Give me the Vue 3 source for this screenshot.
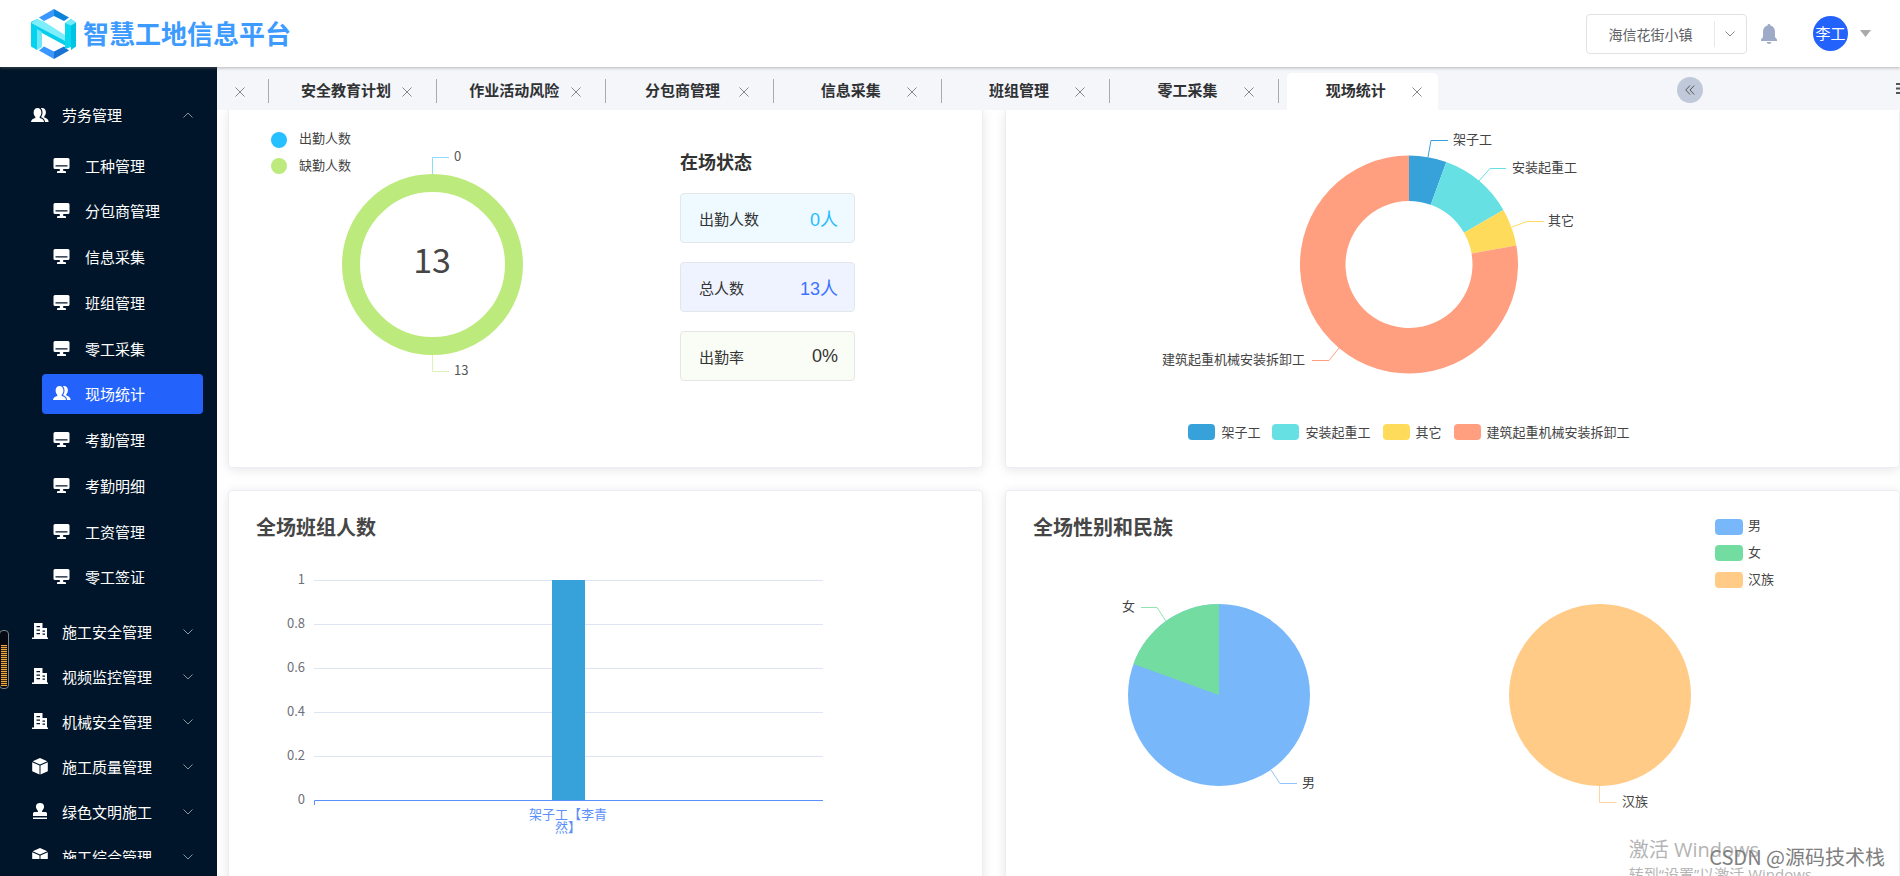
<script setup>
const children = [
  '工种管理', '分包商管理', '信息采集', '班组管理', '零工采集',
  '现场统计', '考勤管理', '考勤明细', '工资管理', '零工签证',
]
const groups = [
  { name: '施工安全管理', icon: 'office' },
  { name: '视频监控管理', icon: 'office' },
  { name: '机械安全管理', icon: 'office' },
  { name: '施工质量管理', icon: 'box' },
  { name: '绿色文明施工', icon: 'stamp' },
  { name: '施工综合管理', icon: 'box' },
]
const icons = {
  users:
    'M6.500 1c2.300 0 3.900 1.900 3.900 4.500 0 1.900-.8 3.400-1.700 4.300v1.200c1.900.6 4.300 1.500 4.300 4H0c0-2.500 2.400-3.400 4.300-4V9.800C3.400 8.900 2.600 7.400 2.600 5.500 2.600 2.900 4.200 1 6.500 1zM9.800 1.300C10.200 1.100 10.700 1 11.200 1c2.200 0 3.700 1.800 3.700 4.200 0 1.800-.8 3.300-1.600 4.100v1.300c1.800.6 4.300 1.500 4.300 4.400h-3.600c-.1-2.500-1.600-3.900-3.800-4.700V9.700c.8-1.100 1.300-2.600 1.300-4.200 0-1.700-.6-3.200-1.700-4.200z',
  platform:
    'M2 1h13a1.500 1.500 0 0 1 1.500 1.500v8A1.500 1.500 0 0 1 15 12h-4.800v2H12a1 1 0 0 1 1 1v1H4v-1a1 1 0 0 1 1-1h1.800v-2H2A1.500 1.500 0 0 1 .5 10.500v-8A1.500 1.500 0 0 1 2 1zM2.500 8.300v1.200h12V8.300z',
  office:
    'M2 0h8.500v5H15v9.500h1V16H0v-1.500h2zM4.500 3v1.300H8V3zM4.500 6.500v1.300H8V6.500zM4.500 10v1.300H8V10zM10.500 7.500v1.200H13V7.500zM10.500 10.500v1.200H13v-1.200z',
  box:
    'M8 0l7.300 3.200L8 6.600.7 3.200zM.2 4.200l7.300 3.400V16.500L.2 13.200zM15.800 4.200L8.500 7.600v8.900l7.300-3.300z',
  stamp:
    'M8 0a4.100 4.100 0 0 1 4.100 4.100C12.100 6.200 10 7 10 9h3.500A1.500 1.500 0 0 1 15 10.500V13H1v-2.500A1.500 1.500 0 0 1 2.500 9H6c0-2-2.100-2.800-2.100-4.900A4.100 4.100 0 0 1 8 0zM1 14.500h14V16H1z',
}
const tabs = ['安全教育计划', '作业活动风险', '分包商管理', '信息采集', '班组管理', '零工采集', '现场统计']

const trades = [
  { name: '架子工', color: '#37a2da', from: 0, to: 20 },
  { name: '安装起重工', color: '#67e0e3', from: 20, to: 60 },
  { name: '其它', color: '#ffdb5c', from: 60, to: 80 },
  { name: '建筑起重机械安装拆卸工', color: '#ff9f7f', from: 80, to: 360 },
]
const stats = [
  { name: '出勤人数', value: '0人', tone: 'sky' },
  { name: '总人数', value: '13人', tone: 'blue' },
  { name: '出勤率', value: '0%', tone: 'lime' },
]
const ticks = ['1', '0.8', '0.6', '0.4', '0.2', '0']

function slice(cx, cy, outer, inner, from, to) {
  const at = (r, deg) => {
    const a = (deg * Math.PI) / 180
    return `${(cx + r * Math.sin(a)).toFixed(2)} ${(cy - r * Math.cos(a)).toFixed(2)}`
  }
  const large = to - from > 180 ? 1 : 0
  return `M${at(outer, from)}A${outer} ${outer} 0 ${large} 1 ${at(outer, to)}L${at(inner, to)}A${inner} ${inner} 0 ${large} 0 ${at(inner, from)}Z`
}
</script>

<template>
  <div class="page">
    <header class="header">
      <a class="brand" href="#">
        <svg width="46" height="50" viewBox="0 0 46 50" aria-hidden="true">
          <path d="M23 0 8 8.500l5 3.500 10-5z" fill="#3a97ff" />
          <path d="M23 0l15 8.500-5 3.500-10-5z" fill="#0b83d8" />
          <path d="M23 50 8 41.500l5-4 10 5z" fill="#3a97ff" />
          <path d="M23 50l15-8.500-5-4-10 5z" fill="#1a72d2" />
          <path d="M0 13l6-3 30 18v9.500L0 18z" fill="#07cdec" />
          <path d="M6 10 12 12 34 26v6L0 14z" fill="#7eeefb" />
          <path d="M0 14l6 4v23L0 37.500z" fill="#04d3f0" />
          <path d="M6 20l5 3v15l-5 3z" fill="#6de6f8" />
          <path d="M34 14l6-4v28l-6 2z" fill="#0ad8ee" />
          <path d="M40 10l5 3.500v24L40 41z" fill="#00c4e4" />
          <path d="M34 14l6-4 5 3.500-5 3z" fill="#74ecfa" />
        </svg>
        <span>智慧工地信息平台</span>
      </a>
      <div class="tools">
        <button class="project" type="button">
          <span class="project-name">海信花街小镇</span>
          <span class="project-arrow">
            <svg width="10" height="6" viewBox="0 0 10 6"><path d="M.5.5 5 5 9.500.5" fill="none" stroke="#888" /></svg>
          </span>
        </button>
        <button class="bell" type="button" aria-label="通知">
          <svg width="18" height="20" viewBox="0 0 18 20">
            <path d="M9 0a1.500 1.500 0 0 1 1.500 1.600C13.300 2.300 15 4.700 15 8v5l2 2.600V17H1v-1.400L3 13V8c0-3.300 1.700-5.700 4.500-6.400A1.500 1.500 0 0 1 9 0zM6.500 18h5a2.600 2.600 0 0 1-5 0z" fill="#9dabc8" />
          </svg>
        </button>
        <button class="user" type="button">
          <span class="avatar">李工</span>
          <svg width="11" height="7" viewBox="0 0 11 7"><path d="M0 0h11L5.500 7z" fill="#aaa" /></svg>
        </button>
      </div>
    </header>

    <div class="body">
      <nav class="sidebar">
        <div class="menu">
          <button class="group" type="button">
            <svg class="icon" width="18" height="16" viewBox="0 0 18 16"><path :d="icons.users" /></svg>
            <span>劳务管理</span>
            <svg class="arrow" width="10" height="6" viewBox="0 0 10 6"><path d="M.5 5.500 5 1l4.500 4.500" /></svg>
          </button>
          <ul class="children">
            <li v-for="name in children" :key="name">
              <a href="#" class="child" :class="{ active: name === '现场统计' }">
                <svg class="icon" width="18" height="17" viewBox="0 0 18 17">
                  <path :d="name === '现场统计' ? icons.users : icons.platform" fill-rule="evenodd" />
                </svg>
                <span>{{ name }}</span>
              </a>
            </li>
          </ul>
          <button v-for="g in groups" :key="g.name" class="group" type="button">
            <svg class="icon" width="18" height="17" viewBox="-1 0 18 17"><path :d="icons[g.icon]" fill-rule="evenodd" /></svg>
            <span>{{ g.name }}</span>
            <svg class="arrow" width="10" height="6" viewBox="0 0 10 6"><path d="M.5.5 5 5 9.500.5" /></svg>
          </button>
        </div>
        <div class="meter"><i></i></div>
      </nav>

      <div class="content">
        <div class="tabbar">
          <button class="close first" type="button" aria-label="关闭">
            <svg width="12" height="12" viewBox="0 0 12 12"><path d="M1.500 1.500l9 9M10.500 1.500l-9 9" /></svg>
          </button>
          <ul class="tabs">
            <li v-for="(t, i) in tabs" :key="t" class="tab" :class="{ current: i === 6 }">
              <a href="#">{{ t }}</a>
              <button class="close" type="button" aria-label="关闭">
                <svg width="12" height="12" viewBox="0 0 12 12"><path d="M1.500 1.500l9 9M10.500 1.500l-9 9" /></svg>
              </button>
            </li>
          </ul>
          <button class="collapse" type="button" aria-label="收起">
            <svg width="10" height="10" viewBox="0 0 10 10"><path d="M5 .5.8 5 5 9.500M9.200.5 5 5l4.200 4.500" /></svg>
          </button>
          <button class="more" type="button" aria-label="菜单">
            <svg width="14" height="11" viewBox="0 0 14 11"><path d="M0 1h14M0 5.500h14M0 10h14" /></svg>
          </button>
        </div>

        <main class="board">
          <section class="card top attendance">
            <svg class="chart" width="440" height="330" viewBox="0 0 440 330">
              <circle cx="50" cy="30" r="8" fill="#26bfff" />
              <text x="70" y="33">出勤人数</text>
              <circle cx="50" cy="56" r="8" fill="#bdea7d" />
              <text x="70" y="60">缺勤人数</text>
              <circle cx="203.500" cy="154.500" r="81.500" fill="none" stroke="#bdea7d" stroke-width="18" />
              <path d="M203.500 64V47.500H220" class="line" stroke="#8adcff" />
              <path d="M203.500 245v16.500H220" class="line" stroke="#dbf3b5" />
              <text x="225" y="51" class="num">0</text>
              <text x="225" y="265" class="num">13</text>
              <text x="203" y="163" class="total">13</text>
            </svg>
            <div class="status">
              <h3>在场状态</h3>
              <dl v-for="s in stats" :key="s.name" class="stat" :class="s.tone">
                <dt>{{ s.name }}</dt>
                <dd>{{ s.value }}</dd>
              </dl>
            </div>
          </section>

          <section class="card top">
            <svg class="chart" width="806" height="290" viewBox="1 0 806 290">
              <path v-for="t in trades" :key="t.name" :d="slice(404, 154.5, 109, 63.5, t.from, t.to)" :fill="t.color" />
              <path d="M423 47l3-16.500h17" class="line" stroke="#37a2da" />
              <text x="448" y="34">架子工</text>
              <path d="M474 71l11-12.500h16" class="line" stroke="#67e0e3" />
              <text x="507" y="62">安装起重工</text>
              <path d="M507 117l15-5.500h17" class="line" stroke="#ffdb5c" />
              <text x="543" y="115">其它</text>
              <path d="M334 238l-10 12.500h-17" class="line" stroke="#ff9f7f" />
              <text x="300" y="254" text-anchor="end">建筑起重机械安装拆卸工</text>
            </svg>
            <ul class="legend">
              <li v-for="t in trades" :key="t.name"><i :style="{ background: t.color }"></i>{{ t.name }}</li>
            </ul>
          </section>

          <section class="card">
            <h2>全场班组人数</h2>
            <svg class="chart bars" width="640" height="320" viewBox="0 0 640 320">
              <g v-for="(t, i) in ticks" :key="t">
                <path v-if="i < 5" :d="`M86 ${21.5 + i * 44}H595`" stroke="#dde4f2" />
                <text x="77" :y="25 + i * 44" text-anchor="end" class="tick">{{ t }}</text>
              </g>
              <rect x="324" y="21" width="33" height="221" fill="#37a2da" />
              <path d="M86.500 246v-4.500H595" fill="none" stroke="#5b8ff9" />
              <text x="340" y="260" text-anchor="middle" class="cat">架子工【李青</text>
              <text x="340" y="273" text-anchor="middle" class="cat">然】</text>
            </svg>
          </section>

          <section class="card">
            <h2>全场性别和民族</h2>
            <svg class="chart genders" width="808" height="330" viewBox="0 0 808 330">
              <circle cx="213" cy="184" r="91" fill="#78b7f9" />
              <path :d="slice(213, 184, 91, 0, 290, 360)" fill="#73dda1" />
              <path d="M160 110l-9-13.500h-16" class="line" stroke="#8fe4b4" />
              <text x="129" y="100" text-anchor="end">女</text>
              <path d="M265 259l9 13.500h17" class="line" stroke="#93c5fa" />
              <text x="296" y="276">男</text>
              <circle cx="594" cy="184" r="91" fill="#ffcb87" />
              <path d="M593.500 275v16.500h17" class="line" stroke="#ffd59f" />
              <text x="616" y="295">汉族</text>
              <rect x="709" y="8" width="28" height="16" rx="4" fill="#78b7f9" />
              <text x="742" y="19">男</text>
              <rect x="709" y="34" width="28" height="16" rx="4" fill="#73dda1" />
              <text x="742" y="46">女</text>
              <rect x="709" y="61" width="28" height="16" rx="4" fill="#ffcb87" />
              <text x="742" y="73">汉族</text>
            </svg>
          </section>
        </main>
      </div>
    </div>

    <div class="activate">
      <p class="activate-title">激活 Windows</p>
      <p>转到“设置”以激活 Windows。</p>
    </div>
    <p class="credit">CSDN @源码技术栈</p>
  </div>
</template>

<style>
body {
  margin: 0;
}
</style>

<style scoped>
.page {
  position: relative;
  display: flex;
  flex-direction: column;
  height: 100vh;
  overflow: hidden;
  background: #fff;
  color: #333;
  font-family: "Noto Sans CJK SC", sans-serif;
  font-size: 15px;
}
button {
  padding: 0;
  border: 0;
  background: none;
  font: inherit;
  color: inherit;
  cursor: pointer;
}
a {
  color: inherit;
  text-decoration: none;
}
ul, dl, dd, p, h2, h3 {
  margin: 0;
  padding: 0;
  list-style: none;
}
svg {
  display: block;
  flex: none;
}

.header {
  position: relative;
  z-index: 2;
  display: flex;
  align-items: center;
  justify-content: space-between;
  flex: none;
  height: 67px;
  padding: 0 29px 0 31px;
  background: #fff;
  box-shadow: 0 1px 3px rgba(120, 120, 120, 0.5);
}
.brand {
  display: flex;
  align-items: center;
  gap: 6px;
  color: #3d9bff;
  font-size: 26px;
  font-weight: 700;
  line-height: 48px;
}
.brand span {
  padding-bottom: 2px;
}
.tools, .user {
  display: flex;
  align-items: center;
}
.project {
  display: flex;
  align-items: center;
  box-sizing: border-box;
  width: 161px;
  height: 40px;
  margin-right: 13px;
  border: 1px solid #e2e2e2;
  border-radius: 4px;
  color: #606266;
  font-size: 14px;
}
.project-name {
  flex: 1;
  text-align: center;
}
.project-arrow {
  display: flex;
  align-items: center;
  height: 26px;
  padding: 0 11px 0 10px;
  border-left: 1px solid #e8e8e8;
}
.bell {
  margin-right: 35px;
}
.user {
  gap: 12px;
}
.avatar {
  width: 35px;
  height: 35px;
  border-radius: 50%;
  background: #2362fb;
  color: #fff;
  line-height: 34px;
  text-align: center;
}

.body {
  display: flex;
  flex: 1;
  min-height: 0;
}
.sidebar {
  position: relative;
  box-sizing: border-box;
  flex: none;
  width: 217px;
  padding: 25px 14px 17px 0;
  background: #001529;
  color: #fff;
}
.menu {
  height: 100%;
  overflow: hidden;
}
.icon {
  fill: #fff;
}
.group {
  display: flex;
  align-items: center;
  width: 100%;
  height: 45px;
  padding: 0 10px 0 31px;
  text-align: left;
}
.group span {
  flex: 1;
  padding-left: 13px;
}
.arrow {
  fill: none;
  stroke: #8a949e;
}
.children {
  display: flex;
  flex-direction: column;
  justify-content: space-between;
  height: 452px;
  margin: 8px 0 12px 42px;
}
.child {
  display: flex;
  align-items: center;
  gap: 14px;
  height: 40px;
  padding-left: 11px;
  border-radius: 4px;
}
.child.active {
  background: #2362fb;
}
.meter {
  position: absolute;
  left: -1px;
  top: 563px;
  box-sizing: border-box;
  width: 10px;
  height: 59px;
  padding: 14px 1px 2px;
  border: 1px solid #7b828a;
  border-radius: 4px;
  background: #050a12;
}
.meter i {
  display: block;
  height: 41px;
  background: repeating-linear-gradient(#f0a63a 0 1px, #3a2a12 1px 2px);
}

.content {
  display: flex;
  flex-direction: column;
  flex: 1;
  min-width: 0;
}
.tabbar {
  position: relative;
  z-index: 1;
  display: flex;
  align-items: center;
  flex: none;
  height: 43px;
  background: #f4f6fa;
  overflow: hidden;
}
.close svg {
  margin: 1px;
  fill: none;
  stroke: #888;
}
.close.first {
  margin: 6px 21px 0 16px;
}
.tabs {
  display: flex;
  flex: 0 1 1178px;
}
.tab {
  display: flex;
  align-items: center;
  flex: 1;
  height: 37px;
  margin-top: 6px;
  font-weight: 700;
  background: linear-gradient(#aaa, #aaa) 0 6px / 1px 24px no-repeat;
}
.tab a {
  width: 108px;
  margin: 0 0 4px 24px;
  color: #303133;
  text-align: center;
}
.tab .close {
  margin-left: auto;
  margin-right: 22px;
}
.tab.current {
  position: relative;
  z-index: 0;
}
.tab.current::before {
  content: "";
  position: absolute;
  z-index: -1;
  inset: 0 8px 0 9px;
  border-radius: 5px 5px 0 0;
  background: #fff;
}
.collapse {
  display: flex;
  align-items: center;
  justify-content: center;
  width: 26px;
  height: 26px;
  margin-top: 3px;
  margin-left: auto;
  border-radius: 50%;
  background: #c0c9da;
}
.collapse svg, .more svg {
  fill: none;
  stroke: #555;
}
.more svg {
  stroke-width: 2;
}
.more {
  margin-left: 193px;
  margin-right: -10px;
}

.board {
  display: grid;
  grid-template-columns: 755fr 895fr;
  gap: 22px;
  padding-left: 11px;
  overflow: hidden;
  align-content: start;
  flex: 1;
}
.card {
  box-sizing: border-box;
  min-height: 400px;
  padding: 21px 27px;
  border: 1px solid #ebeef5;
  border-radius: 4px;
  background: #fff;
  box-shadow: 0 2px 12px rgba(0, 0, 0, 0.1);
}
.card.top {
  min-height: 358px;
  padding: 0;
  border-top: 0;
  border-radius: 0 0 4px 4px;
}
.card h2 {
  color: #464646;
  font-size: 20px;
  line-height: 30px;
}
.chart {
  max-width: 100%;
}
.bars {
  margin: 17px 0 0 -28px;
}
.genders {
  margin: -31px 0 0 -27px;
  max-width: none;
}
.chart text {
  fill: #444;
  font-size: 13px;
}
.chart .num {
  fill: #555;
}
.chart .tick {
  fill: #6e7079;
}
.chart .cat {
  fill: #5b8ff9;
}
.chart .total {
  fill: #464646;
  font-size: 34px;
  text-anchor: middle;
}
.line {
  fill: none;
  stroke-width: 1;
}
.attendance {
  display: flex;
  gap: 11px;
}
.status {
  width: 175px;
  padding-top: 38px;
}
.status h3 {
  margin-bottom: 18px;
  font-size: 18px;
  line-height: 27px;
}
.stat {
  display: flex;
  align-items: center;
  justify-content: space-between;
  box-sizing: border-box;
  height: 50px;
  margin-bottom: 19px;
  padding: 0 16px 0 18px;
  border: 1px solid #e4e7ea;
  border-radius: 4px;
}
.stat dd {
  font-family: "Liberation Sans", "Noto Sans CJK SC", sans-serif;
  font-size: 18px;
}
.sky {
  background: #eefaff;
}
.sky dd {
  color: #26bcff;
}
.blue {
  background: #eff3ff;
}
.blue dd {
  color: #3c74ff;
}
.lime {
  background: #fafdf5;
}
.legend {
  display: flex;
  justify-content: center;
  gap: 12px;
  max-width: 806px;
  padding-top: 22px;
  color: #444;
  font-size: 13px;
  line-height: 20px;
}
.legend li {
  display: flex;
  align-items: center;
  gap: 6px;
}
.legend i {
  width: 27px;
  height: 16px;
  border-radius: 4px;
}

.activate {
  position: absolute;
  z-index: 3;
  right: 73px;
  bottom: -8px;
  color: #b4b4b4;
  font-family: "Open Sans", "Noto Sans CJK SC", sans-serif;
  line-height: 20px;
  white-space: nowrap;
}
.activate-title {
  font-size: 20px;
  line-height: 28px;
}
.credit {
  position: absolute;
  z-index: 4;
  right: 15px;
  bottom: 5px;
  color: #808080;
  font-size: 20px;
  line-height: 28px;
}
</style>
